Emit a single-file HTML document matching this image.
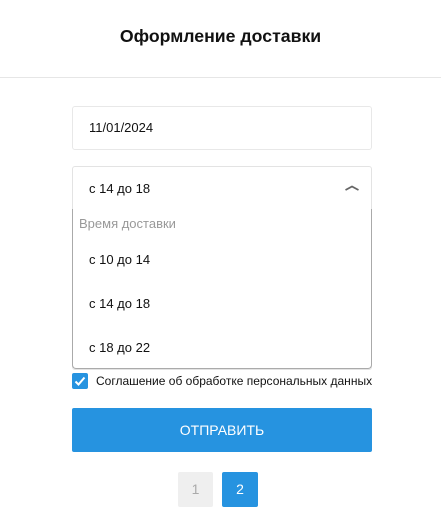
<!DOCTYPE html>
<html><head><meta charset="utf-8"><style>
body{margin:0;width:441px;height:517px;background:#fff;font-family:"Liberation Sans",sans-serif;position:relative;overflow:hidden;color:#111}
.a{position:absolute}
</style></head><body>
<div class="a" style="top:0;left:0;width:441px;height:77px;border-bottom:1px solid #e6e6e6;"></div>
<div class="a" style="top:26px;left:0;width:441px;text-align:center;font-size:17.7px;font-weight:bold;">Оформление доставки</div>
<div class="a" style="left:72px;top:106px;width:298px;height:42px;border:1px solid #e8e8e8;border-radius:3px;"></div>
<div class="a" style="left:89px;top:120px;font-size:13px;">11/01/2024</div>
<div class="a" style="left:72px;top:166px;width:298px;height:202px;border:1px solid #e3e3e3;border-radius:3px;"></div>
<div class="a" style="left:72px;top:209px;width:298px;height:159px;border:1px solid #aaa;border-top:none;border-radius:0 0 4px 4px;"></div>
<div class="a" style="left:89px;top:181px;font-size:13px;">с 14 до 18</div>
<svg class="a" style="left:344px;top:184px" width="16" height="8"><path d="M1.5 6 L8 2.5 L14.5 6" stroke="#666" stroke-width="1.8" fill="none"/></svg>
<div class="a" style="left:79px;top:216px;font-size:13px;color:#999;">Время доставки</div>
<div class="a" style="left:89px;top:252px;font-size:13px;">с 10 до 14</div>
<div class="a" style="left:89px;top:296px;font-size:13px;">с 14 до 18</div>
<div class="a" style="left:89px;top:340px;font-size:13px;">с 18 до 22</div>
<div class="a" style="left:72px;top:373px;width:16px;height:16px;background:#2693e0;border-radius:2px;"></div>
<svg class="a" style="left:72px;top:373px" width="16" height="16"><path d="M3.5 8.5 L6.5 11.5 L12.5 4.5" stroke="#fff" stroke-width="2" fill="none"/></svg>
<div class="a" style="left:96px;top:374px;font-size:12px;">Соглашение об обработке персональных данных</div>
<div class="a" style="left:72px;top:408px;width:300px;height:44px;background:#2693e0;border-radius:2px;color:#fff;font-size:14px;text-align:center;line-height:44px;">ОТПРАВИТЬ</div>
<div class="a" style="left:178px;top:472px;width:35px;height:35px;background:#efefef;border-radius:2px;color:#aaa;font-size:14px;text-align:center;line-height:35px;">1</div>
<div class="a" style="left:222px;top:472px;width:36px;height:35px;background:#2693e0;border-radius:2px;color:#fff;font-size:14px;text-align:center;line-height:35px;">2</div>
</body></html>
